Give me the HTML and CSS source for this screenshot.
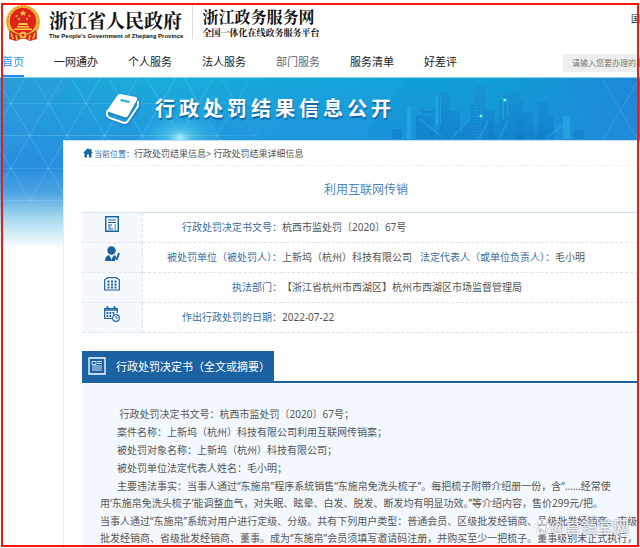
FILE: index.html
```html
<!DOCTYPE html>
<html lang="zh-CN">
<head>
<meta charset="utf-8">
<title>行政处罚结果信息公开</title>
<link rel="stylesheet" href="styles.css">
</head>
<body>
<div class="page">
  <header class="top">
    <div class="brand">
      <svg class="emblem" viewBox="0 0 36 36" aria-hidden="true">
        <path d="M5 24 L31 24 L32 34 L25 36 L18 33 L11 36 L4 34Z" fill="#d8281c"/>
        <circle cx="18" cy="17" r="17" fill="#efb93a"/>
        <circle cx="18" cy="17" r="15.5" fill="none" stroke="#d98b1e" stroke-width="1" stroke-dasharray="2 1.5"/>
        <circle cx="18" cy="16" r="13.2" fill="#e2231a"/>
        <path d="M18 5l1 2.200h2.400l-1.900 1.500.8 2.400-2.300-1.500-2.300 1.500.8-2.400L14.600 7.200H17z" fill="#f8d24a"/>
        <g fill="#f8d24a"><circle cx="11.500" cy="11" r="1"/><circle cx="14" cy="14" r="1"/><circle cx="22" cy="14" r="1"/><circle cx="24.500" cy="11" r="1"/></g>
        <path d="M14 18h8l1 2H13zM12 21h12v1.500H12zM9 23.500h18V25H9z" fill="#f8d24a"/>
        <path d="M5 25q6 5 13 5t13-5l1 5q-6 4-14 4T4 30z" fill="#d8281c"/>
        <circle cx="18" cy="30" r="3.500" fill="#f3c544"/><circle cx="18" cy="30" r="1.500" fill="#d8281c"/>
        <path d="M6 28l2 6M30 28l-2 6M11 30l1 5M25 30l-1 5" stroke="#f3c544" stroke-width="1.500"/>
      </svg>
      <div class="gov">
        <strong class="gov-name">浙江省人民政府</strong>
        <span class="gov-en">The People's Government of Zhejiang Province</span>
      </div>
      <div class="service">
        <strong class="service-name">浙江政务服务网</strong>
        <span class="service-sub">全国一体化在线政务服务平台</span>
      </div>
      <a class="region" href="#">国</a>
    </div>
    <div class="menu">
      <nav class="nav">
        <a class="on" href="#">首页</a>
        <a href="#">一网通办</a>
        <a href="#">个人服务</a>
        <a href="#">法人服务</a>
        <a class="soft" href="#">部门服务</a>
        <a href="#">服务清单</a>
        <a href="#">好差评</a>
      </nav>
      <input class="search" type="text" aria-label="搜索" placeholder="请输入您要办理的事">
    </div>
  </header>

  <main class="stage">
    <svg class="scene" viewBox="0 0 640 170" preserveAspectRatio="xMidYMin slice" aria-hidden="true">
      <defs>
        <pattern id="tri" x="11" y="26" width="37.500" height="65" patternUnits="userSpaceOnUse">
          <path d="M0 0H37.500M0 32.500H37.500M0 0L37.500 65M37.500 0L0 65" stroke="#8fe0f5" stroke-width=".8" fill="none"/>
          <circle cx="0" cy="0" r="1.200" fill="#bdf0fb"/><circle cx="37.500" cy="0" r="1.200" fill="#bdf0fb"/><circle cx="18.750" cy="32.500" r="1.200" fill="#bdf0fb"/>
        </pattern>
        <linearGradient id="fadeX"><stop offset="0" stop-color="#fff" stop-opacity=".35"/><stop offset=".3" stop-color="#fff" stop-opacity=".4"/><stop offset=".45" stop-color="#fff" stop-opacity="0"/></linearGradient>
        <mask id="left"><rect width="640" height="130" fill="url(#fadeX)"/></mask>
        <radialGradient id="glow"><stop offset="0" stop-color="#b8f6fb" stop-opacity=".9"/><stop offset=".3" stop-color="#6cdcf0" stop-opacity=".5"/><stop offset="1" stop-color="#35c0e6" stop-opacity="0"/></radialGradient>
        <linearGradient id="tower" x2="0" y2="1"><stop offset="0" stop-color="#1687cb" stop-opacity=".35"/><stop offset="1" stop-color="#0f78c6" stop-opacity=".6"/></linearGradient>
      </defs>
      <path d="M0 0H75L0 90z" fill="#3d9ae0" opacity=".25"/>
      <rect width="640" height="130" fill="url(#tri)" mask="url(#left)"/>
      <ellipse cx="180" cy="61" rx="42" ry="26" fill="url(#glow)"/>
      <path d="M408 0L363 62H640V0z" fill="#078fce" opacity=".18"/>
      <g fill="url(#tower)">
        <path d="M392 52h10v10h-10zM416 38h8v24h-8zM422 31h12v31h-12zM439 15h10v47h-10zM443 41h9v21h-9zM449 34h11v28h-11zM463 45h8v17h-8zM471 27h9v35h-9zM474 8h11v54h-11zM484 33h11v29h-11zM497 23h8v39h-8zM503 15h17v47h-17zM514 22h9v40h-9zM523 35h10v27h-10zM538 25h10v37h-10zM546 37h8v25h-8zM574 53h10v9h-10z"/>
        <path d="M430 53h10v9h-10zM457 48h7v14h-7zM488 42h9v20h-9zM516 40h9v22h-9zM530 50h14v12h-14z"/>
      </g>
      <g fill="#35c5e8" opacity=".35"><path d="M436 20h2v28h-2zM440 20h1v28h-1zM498 22h1v24h-1zM502 20h2v22h-2zM507 24h1v16h-1zM563 39h7v23h-7zM407 30h4v32h-4z"/><path d="M423 32h10v1h-10zM423 37h10v1h-10z"/></g>
      <path d="M474 9V62M477 9V62M481 9V62" stroke="#48c4eb" stroke-width=".7" stroke-dasharray="1 2" opacity=".5"/>
      <g stroke="#58e0ef" opacity=".18" stroke-width="2"><path d="M420 42l22 18M468 44l-16 17M488 44l-9 18M508 44l-9 18M562 48l-16 14"/></g>
      <circle cx="505" cy="23" r="1.500" fill="#7deef5"/><circle cx="481" cy="39" r="1.500" fill="#7deef5"/>
      <path d="M601 0l38 65M640 0l-38 65" stroke="#7fc3ee" stroke-width=".8" opacity=".35"/>
    </svg>

    <div class="banner">
      <svg class="book" viewBox="0 0 34 32" aria-hidden="true">
        <path d="M14 1 L30 4 Q32 5 31 7 L22 23 Q21 25 18 24 L3 19 Q1 18 2 16 L11 3 Q12 1 14 1Z" fill="#fff"/>
        <path d="M2 17 Q-1 23 4 25 L18 30 Q21 30 22 28 L32 13 V8" fill="none" stroke="#fff" stroke-width="2"/>
        <path d="M15 6l9 2-1 2-9-2z" fill="#2aaedb"/>
      </svg>
      <h1 class="banner-title">行政处罚结果信息公开</h1>
    </div>

    <div class="panel">
      <div class="crumbs">
        <svg class="home" viewBox="0 0 10 10" aria-hidden="true"><path d="M5 0L0 5h1.500v4.500h2.500V6.500h2v3h2.500V5H10L8.500 3.500V1H7v1z" fill="#1b62a3"/></svg>
        <span class="crumb-label">当前位置：</span>
        <a href="#">行政处罚结果信息</a><span>&gt;&nbsp;</span><a href="#">行政处罚结果详细信息</a>
      </div>

      <h2 class="title">利用互联网传销</h2>

      <table class="info">
        <tr>
          <td class="ico"><svg viewBox="0 0 16 16"><path d="M1.700 .7h12.600v14.600H1.700z" fill="none" stroke="#1b62a3" stroke-width="1.400"/><path d="M4 4h8M4 6.500h8M4 9h4M4 11h3M4 13h5M10.500 9h1.500M10.500 11h1.500M10.500 13h1.500" stroke="#1b62a3" stroke-width="1"/></svg></td>
          <th>行政处罚决定书文号：</th>
          <td>杭西市监处罚〔2020〕67号</td>
        </tr>
        <tr>
          <td class="ico"><svg viewBox="0 0 16 16"><circle cx="7.500" cy="4.500" r="4.200" fill="#1b62a3"/><path d="M1 15q0-5 4-6l2.500 4L10 9q2 .5 2 2l-1 4z" fill="#1b62a3"/><path d="M7.500 9.500v4" stroke="#fff" stroke-width="1"/><path d="M15 7l-2.500 7" stroke="#1b62a3" stroke-width="2"/></svg></td>
          <th>被处罚单位（被处罚人）：</th>
          <td>上新坞（杭州）科技有限公司<span class="pair">法定代表人（或单位负责人）：</span>毛小明</td>
        </tr>
        <tr>
          <td class="ico"><svg viewBox="0 0 16 16"><path d="M.7 14V4Q.7 3 2 3L4 1.700h8L14 3q1.300 0 1.300 1v10z" fill="none" stroke="#1b62a3" stroke-width="1.200"/><path d="M3.500 5.500h9M3.500 8.500h9M3.500 11.500h9" stroke="#1b62a3" stroke-width="2" stroke-dasharray="2 1.500"/></svg></td>
          <th>执法部门：</th>
          <td>【浙江省杭州市西湖区】杭州市西湖区市场监督管理局</td>
        </tr>
        <tr>
          <td class="ico"><svg viewBox="0 0 16 16"><path d="M8 12.500H.7V2.500h12.600V7" fill="none" stroke="#1b62a3" stroke-width="1.200"/><path d="M.7 4h12.600M3.500 0v3M10.500 0v3" stroke="#1b62a3" stroke-width="1.600"/><path d="M2.500 7h8M2.500 10h5" stroke="#1b62a3" stroke-width="1.800" stroke-dasharray="1.800 1.200"/><circle cx="12" cy="12" r="3.300" fill="#fff" stroke="#1b62a3" stroke-width="1.200"/><path d="M12 10v2.200h1.800" fill="none" stroke="#1b62a3"/></svg></td>
          <th>作出行政处罚的日期：</th>
          <td>2022-07-22</td>
        </tr>
      </table>

      <section class="doc">
        <div class="doc-head">
          <h3 class="doc-tab">
            <svg class="doc-icon" viewBox="0 0 18 18" aria-hidden="true"><path d="M1 1h16v16H1z" fill="none" stroke="#fff" stroke-width="1.300"/><path d="M4 4.500h4v3H4zM9 4.500h5M9 6.500h5M4 9h10M4 11h10M4 13h10" fill="none" stroke="#cfe2f4"/></svg>
            行政处罚决定书（全文或摘要）
          </h3>
        </div>
        <div class="doc-body">
          <p>&nbsp;行政处罚决定书文号：杭西市监处罚〔2020〕67号；</p>
          <p>案件名称：上新坞（杭州）科技有限公司利用互联网传销案；</p>
          <p>被处罚对象名称：上新坞（杭州）科技有限公司；</p>
          <p>被处罚单位法定代表人姓名：毛小明；</p>
          <p>主要违法事实：当事人通过“东施帛”程序系统销售“东施帛免洗头梳子”。每把梳子附带介绍册一份，含“……经常使<br>用‘东施帛免洗头梳子’能调整血气，对失眠、眩晕、白发、脱发、断发均有明显功效。”等介绍内容，售价299元/把。</p>
          <p class="flush">当事人通过“东施帛”系统对用户进行定级、分级。共有下列用户类型：普通会员、区级批发经销商、县级批发经销商、市级<br>批发经销商、省级批发经销商、董事。成为“东施帛”会员须填写邀请码注册，并购买至少一把梳子。董事级别未正式执行，</p>
        </div>
      </section>
    </div>
  </main>

  <div class="mark">
    <svg class="paw" viewBox="0 0 16 16" aria-hidden="true"><g fill="#fff" stroke="#aab2ba" stroke-width=".4"><ellipse cx="5.500" cy="3" rx="2" ry="2.700"/><ellipse cx="10.500" cy="3" rx="2" ry="2.700"/><ellipse cx="2" cy="7" rx="1.800" ry="2.400"/><ellipse cx="14" cy="7" rx="1.800" ry="2.400"/><path d="M8 6.500c2 0 3 2 4.500 3.500 2 2 1 5-1.500 5-1.500 0-2-.3-3-.3s-1.500.3-3 .3c-2.500 0-3.500-3-1.500-5C5 8.500 6 6.500 8 6.500z"/></g><path d="M7 9v4H5v-2.500h2M9 10.500V13h2.500v-2.500" fill="none" stroke="#98a1aa" stroke-width=".8"/></svg>
    <span>@直销堂网</span>
  </div>
  <div class="frame"></div>
</div>
</body>
</html>
```
FILE: styles.css
```css
* { box-sizing: border-box; }

body {
  margin: 0;
  background: #fff;
  color: #555;
  font: 10px/17px "Noto Sans", "Noto Sans CJK SC", sans-serif;
}

h1, h2, h3, p { margin: 0; font-weight: 400; }
a { color: inherit; text-decoration: none; }

.page {
  position: relative;
  height: 100vh;
  overflow: hidden;
}

.brand {
  display: flex;
  height: 46px;
  padding: 5px 0 0 5px;
  color: #111;
}

.emblem { width: 36px; height: 36px; }

.gov, .service { display: flex; flex-direction: column; white-space: nowrap; }
.gov { margin-left: 8px; padding-top: 3px; }

.gov-name, .service-name, .service-sub {
  font-family: "Noto Serif CJK SC", "Noto Sans CJK SC", serif;
  font-weight: 700;
}
.gov-name { font-size: 19px; line-height: 23px; }
.gov-en { font: bold 6px/10px "Liberation Sans", sans-serif; }

.service {
  height: 34px;
  margin-left: 9px;
  padding: 2px 0 0 9px;
  border-left: 1px solid #ddd;
}
.service-name { font-size: 16px; line-height: 20px; }
.service-sub { font-size: 9px; line-height: 12px; }

.region {
  margin-left: auto;
  padding-top: 5px;
  font-size: 9px;
}

.menu {
  display: flex;
  justify-content: space-between;
  height: 31px;
  padding-left: 2px;
}

.nav { display: flex; gap: 30px; }
.nav a {
  color: #222;
  font-size: 11px;
  line-height: 31px;
  white-space: nowrap;
}
.nav .on { color: #2f96f3; border-bottom: 2px solid #1e87f0; }
.nav .soft { color: #666; }

.search {
  width: 77px;
  height: 18px;
  margin-top: 8px;
  padding: 0 0 0 9px;
  border: 0;
  background: #eceeef;
  font: 8px/18px "Noto Sans", "Noto Sans CJK SC", sans-serif;
}
.search::placeholder { color: #777; }

.stage {
  position: relative;
  background:
    linear-gradient(rgba(40, 140, 224, 0) 0, rgba(40, 140, 224, .9) 90px, #4aa2e2 115px, #a9dbef 142px, #fff 172px),
    linear-gradient(90deg, #219fd8, #19add9 25%, #12a3d8 60%, #14a0d6 80%, #2585d8);
}

.scene {
  position: absolute;
  top: 0;
  left: 0;
  width: 100%;
  height: 170px;
}

.banner {
  position: relative;
  display: flex;
  align-items: center;
  height: 63px;
  padding-left: 106px;
  border-top: 1px solid #8fcbe8;
}

.book { width: 34px; height: 32px; filter: drop-shadow(1px 1px 1px #1673ad); }

.banner-title {
  margin-left: 15px;
  color: #fff;
  font-size: 20px;
  font-weight: 700;
  line-height: 30px;
  letter-spacing: 4px;
  text-shadow: 1px 2px 1px #1268a8;
}

.panel {
  position: relative;
  margin-left: 63px;
  padding: 0 2px 0 18px;
  border-left: 1px solid #e4ecf3;
  border-top: 1px solid #c5e0f3;
  background: #fff;
}

.crumbs {
  display: flex;
  align-items: center;
  height: 25px;
  border-bottom: 1px dashed #eee;
  font-size: 9px;
}
.home { width: 10px; height: 10px; margin: 0 1px; }
.crumb-label { color: #2a6fb0; font-size: 8px; }

.title {
  height: 46px;
  padding: 12px 0 0 12px;
  color: #4a86c5;
  font-size: 12px;
  line-height: 24px;
  text-align: center;
}

.info {
  width: 100%;
  border-collapse: collapse;
  border-top: 1px solid #d5e4f1;
}
.info tr { height: 30px; border-bottom: 1px dashed #d5e6f5; }
.info td, .info th { padding: 0; white-space: nowrap; }
.info th {
  width: 140px;
  color: #3a6da5;
  font-weight: 400;
  text-align: right;
}
.info .ico {
  width: 60px;
  padding-bottom: 7px;
  border-right: 1px dashed #d5e6f5;
  background: #f5f9fe;
  text-align: center;
}
.ico svg { display: block; width: 16px; height: 16px; margin: 0 auto; }
.pair { margin-left: 8px; color: #3a6da5; }

.doc { margin-top: 18px; }
.doc-head { border-bottom: 2px solid #1c62a2; }
.doc-tab {
  display: flex;
  align-items: center;
  gap: 10px;
  width: 192px;
  height: 30px;
  padding-left: 6px;
  background: #1c62a2;
  color: #fff;
  font-size: 11px;
  white-space: nowrap;
}
.doc-icon { flex: none; width: 18px; height: 18px; }

.doc-body {
  margin-top: 1px;
  padding: 22px 0 20px 18px;
  background: #f3f8fe;
  white-space: nowrap;
}
.doc-body p { margin-bottom: 1px; text-indent: 17px; }
.doc-body .flush { text-indent: 0; }

.mark {
  position: absolute;
  right: 11px;
  bottom: 10px;
  display: flex;
  align-items: center;
  gap: 1px;
  color: rgba(255, 255, 255, .9);
  font-size: 16px;
  line-height: 22px;
  text-shadow: 0 0 2px #666;
}
.paw { width: 16px; height: 16px; }

.frame {
  position: absolute;
  inset: 3px 1px 1px 1px;
  border: 2px solid #f8160f;
  pointer-events: none;
}
```
